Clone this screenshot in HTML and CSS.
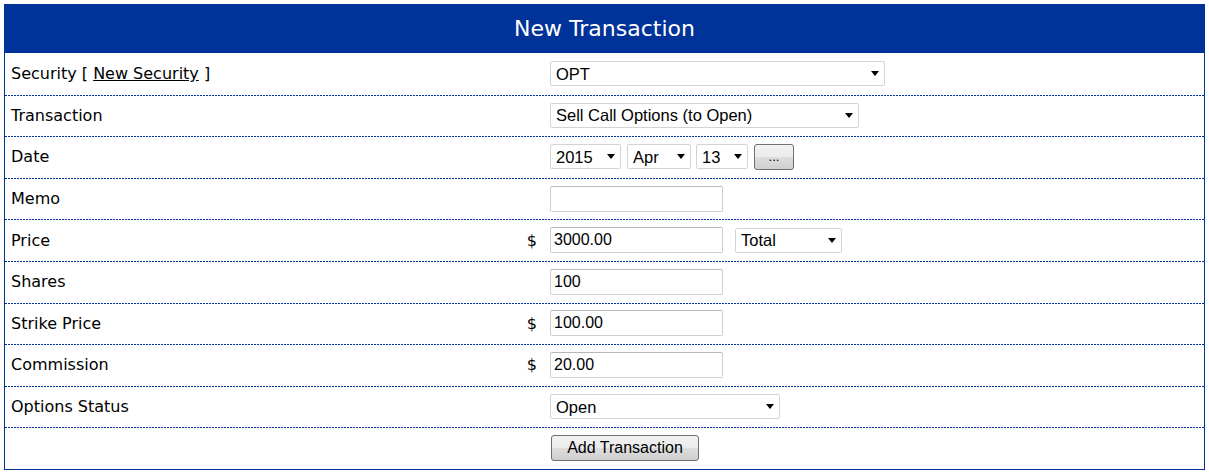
FILE: index.html
```html
<!DOCTYPE html>
<html lang="en">
<head>
    <meta charset="UTF-8">
    <title>New Transaction</title>
    <link rel="stylesheet" href="styles.css">
</head>
<body>
    <div class="txn-form">
        <div class="txn-head">New Transaction</div>

        <div class="txn-row">
            <div class="lbl"><span>Security [ <a href="#">New Security</a> ]</span></div>
            <div class="ctl">
                <span class="pick w-security"><select><option>OPT</option></select></span>
            </div>
        </div>

        <div class="txn-row">
            <div class="lbl"><span>Transaction</span></div>
            <div class="ctl">
                <span class="pick w-type"><select><option>Sell Call Options (to Open)</option></select></span>
            </div>
        </div>

        <div class="txn-row">
            <div class="lbl"><span>Date</span></div>
            <div class="ctl">
                <span class="pick w-year"><select><option>2015</option></select></span>
                <span class="pick w-month"><select><option>Apr</option></select></span>
                <span class="pick w-day"><select><option>13</option></select></span>
                <button class="btn btn-cal">...</button>
            </div>
        </div>

        <div class="txn-row">
            <div class="lbl"><span>Memo</span></div>
            <div class="ctl"><input class="txt" type="text" value=""></div>
        </div>

        <div class="txn-row">
            <div class="lbl"><span>Price</span><span>$</span></div>
            <div class="ctl">
                <input class="txt" type="text" value="3000.00">
                <span class="pick w-total"><select><option>Total</option></select></span>
            </div>
        </div>

        <div class="txn-row">
            <div class="lbl"><span>Shares</span></div>
            <div class="ctl"><input class="txt" type="text" value="100"></div>
        </div>

        <div class="txn-row">
            <div class="lbl"><span>Strike Price</span><span>$</span></div>
            <div class="ctl"><input class="txt" type="text" value="100.00"></div>
        </div>

        <div class="txn-row">
            <div class="lbl"><span>Commission</span><span>$</span></div>
            <div class="ctl"><input class="txt" type="text" value="20.00"></div>
        </div>

        <div class="txn-row">
            <div class="lbl"><span>Options Status</span></div>
            <div class="ctl">
                <span class="pick w-status"><select><option>Open</option></select></span>
            </div>
        </div>

        <div class="txn-row">
            <div class="lbl"></div>
            <div class="ctl"><button class="btn btn-add">Add Transaction</button></div>
        </div>
    </div>
</body>
</html>
```

FILE: styles.css
```css
body {
    margin: 4px;
    font-family: "DejaVu Sans", Verdana, sans-serif;
    font-size: 16px;
    color: #000;
    background-color: #fff;
}
.txn-form {
    border: 1px solid #003399;
}
.txn-head {
    height: 48px;
    line-height: 48px;
    background-color: #003399;
    color: #fff;
    text-align: center;
    font-size: 22px;
}
/* rows: blue dotted rule on top, 2px dot / 1px gap */
.txn-row {
    display: grid;
    grid-template-columns: 540px 1fr;
    height: 41.6px;
    background-image: linear-gradient(to right, #003399 2px, transparent 2px);
    background-size: 3px 1px;
    background-repeat: repeat-x;
    background-position: 0 0;
}
.txn-row:nth-child(2) {
    background-image: none;
}
.lbl {
    display: flex;
    justify-content: space-between;
    align-items: center;
    padding: 0 8px 0 6px;
}
.lbl a {
    color: #000;
}
.ctl {
    display: flex;
    align-items: center;
    gap: 6px;
    padding-left: 5px;
}
.pick {
    position: relative;
    display: inline-block;
    height: 25px;
}
.pick select {
    appearance: none;
    -webkit-appearance: none;
    width: 100%;
    height: 25px;
    margin: 0;
    padding: 0 20px 0 5px;
    border: 1px solid #d4d4d4;
    border-radius: 2px;
    background-color: #fff;
    font-family: "Liberation Sans", Arial, sans-serif;
    font-size: 16.5px;
    color: #000;
}
.pick::after {
    content: "";
    position: absolute;
    right: 6px;
    top: 10px;
    border-left: 4.5px solid transparent;
    border-right: 4.5px solid transparent;
    border-top: 5px solid #000;
    pointer-events: none;
}
.w-security { width: 335px; }
.w-type { width: 309px; }
.w-year { width: 71px; }
.w-month { width: 64px; }
.w-day { width: 52px; margin-left: -1px; }
.w-total { width: 107px; margin-left: 6px; }
.w-status { width: 230px; }
.txt {
    width: 173px;
    height: 26px;
    box-sizing: border-box;
    margin: 0;
    padding: 0 3px;
    border: 1px solid #cfcfcf;
    border-top-color: #b8b8b8;
    border-radius: 2px;
    font-family: "Liberation Sans", Arial, sans-serif;
    font-size: 16px;
    color: #000;
}
.btn {
    height: 26px;
    margin: 0;
    padding: 0;
    border: 1px solid #707070;
    border-radius: 3px;
    background: linear-gradient(#f2f2f2, #ebebeb 50%, #dddddd 50%, #cfcfcf);
    font-family: "Liberation Sans", Arial, sans-serif;
    font-size: 16px;
    color: #000;
}
.btn-cal {
    width: 40px;
    font-size: 13px;
}
.btn-add {
    width: 148px;
    margin-left: 1px;
}
```
